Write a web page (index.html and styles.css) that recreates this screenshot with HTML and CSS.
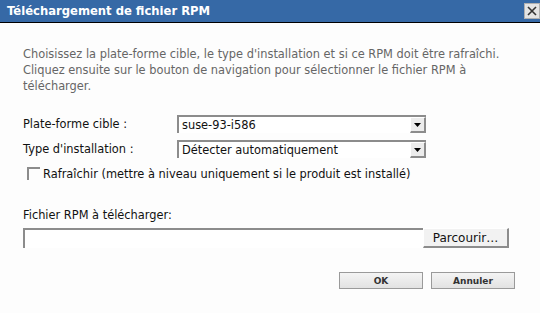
FILE: index.html
```html
<!DOCTYPE html>
<html lang="fr">
<head>
<meta charset="utf-8">
<link rel="stylesheet" href="styles.css">
</head>
<body>
<div class="dialog">
  <div class="titlebar">
    <span class="title">Téléchargement de fichier RPM</span>
    <span class="close"><svg width="12" height="12" viewBox="0 0 12 12"><path d="M2 2 L10 10 M10 2 L2 10" stroke="#333" stroke-width="1.6" fill="none"/></svg></span>
  </div>
  <div class="content">
    <p class="intro">Choisissez la plate-forme cible, le type d'installation et si ce RPM doit être rafraîchi. Cliquez ensuite sur le bouton de navigation pour sélectionner le fichier RPM à télécharger.</p>
    <div class="form">
      <div class="row">
        <span class="label">Plate-forme cible :</span>
        <div class="select"><span class="value">suse-93-i586</span><span class="arrow"><svg width="7" height="4" viewBox="0 0 7 4"><path d="M0 0 H7 L3.5 4 Z" fill="#000"/></svg></span></div>
      </div>
      <div class="row">
        <span class="label">Type d'installation :</span>
        <div class="select"><span class="value">Détecter automatiquement</span><span class="arrow"><svg width="7" height="4" viewBox="0 0 7 4"><path d="M0 0 H7 L3.5 4 Z" fill="#000"/></svg></span></div>
      </div>
      <div class="checkrow">
        <span class="checkbox"></span>
        <span class="label">Rafraîchir (mettre à niveau uniquement si le produit est installé)</span>
      </div>
    </div>
    <div class="filelabel">Fichier RPM à télécharger:</div>
    <div class="filerow">
      <div class="fileinput"></div>
      <div class="browse">Parcourir…</div>
    </div>
    <div class="actions">
      <div class="btn">OK</div>
      <div class="btn">Annuler</div>
    </div>
  </div>
</div>
</body>
</html>
```
FILE: styles.css
```css
html, body {
  margin: 0;
  padding: 0;
  background: #fdfdfd;
}
.dialog {
  width: 540px;
  height: 313px;
  font-family: "DejaVu Sans", sans-serif;
  background: #fdfdfd;
  overflow: hidden;
}
.titlebar {
  height: 22px;
  background: #3669a6;
  border-bottom: 1px solid #000;
  display: flex;
  align-items: center;
  justify-content: space-between;
  padding-left: 7px;
}
.title {
  color: #fff;
  font-weight: bold;
  font-size: 11.6px;
}
.close {
  width: 16px;
  height: 16px;
  background: #e4e4e4;
  border: 1px solid #b0b0b0;
  box-sizing: border-box;
  display: flex;
  align-items: center;
  justify-content: center;
}
.content {
  padding: 23px 0 0 23px;
}
.intro {
  margin: 0;
  color: #666;
  font-size: 11.4px;
  line-height: 16px;
  width: 500px;
}
.form {
  margin-top: 21px;
  display: flex;
  flex-direction: column;
}
.row {
  display: flex;
  align-items: center;
  height: 18px;
  margin-bottom: 7px;
}
.label {
  font-size: 11.4px;
  color: #111;
}
.row .label {
  width: 154px;
}
.select {
  width: 249px;
  height: 18px;
  box-sizing: border-box;
  border-top: 2px solid #8c8c8c;
  border-left: 2px solid #8c8c8c;
  background: #fff;
  display: flex;
  align-items: center;
  justify-content: space-between;
}
.select .value {
  font-size: 11.4px;
  color: #111;
  padding-left: 3px;
}
.arrow {
  width: 16px;
  height: 16px;
  box-sizing: border-box;
  background: #ececec;
  border-top: 1px solid #fff;
  border-left: 1px solid #fff;
  border-right: 2px solid #8c8c8c;
  border-bottom: 2px solid #8c8c8c;
  display: flex;
  align-items: center;
  justify-content: center;
}
.checkrow {
  display: flex;
  align-items: flex-start;
  margin-top: 1px;
  height: 16px;
}
.checkrow .label {
  line-height: 16px;
}
.checkbox {
  width: 13px;
  height: 13px;
  box-sizing: border-box;
  border-top: 2px solid #8c8c8c;
  border-left: 2px solid #8c8c8c;
  margin: 1px 3px 0 4px;
}
.filelabel {
  font-size: 11.4px;
  color: #111;
  margin-top: 26px;
}
.filerow {
  display: flex;
  align-items: flex-start;
  margin-top: 6px;
}
.fileinput {
  width: 400px;
  height: 20px;
  box-sizing: border-box;
  border-top: 2px solid #8c8c8c;
  border-left: 2px solid #8c8c8c;
  background: #fff;
}
.browse {
  width: 86px;
  height: 20px;
  box-sizing: border-box;
  background: #f2f2f2;
  border-right: 2px solid #8c8c8c;
  border-bottom: 2px solid #8c8c8c;
  border-top: 1px solid #fff;
  border-left: 1px solid #fff;
  font-size: 12px;
  color: #111;
  display: flex;
  align-items: center;
  justify-content: center;
}
.actions {
  display: flex;
  gap: 8px;
  margin-top: 24px;
  margin-left: 316px;
}
.btn {
  width: 84px;
  height: 17px;
  box-sizing: border-box;
  border: 1px solid #9a9a9a;
  background: linear-gradient(#f4f4f4, #e2e2e2);
  font-size: 9px;
  font-weight: bold;
  color: #333;
  display: flex;
  align-items: center;
  justify-content: center;
}
```
